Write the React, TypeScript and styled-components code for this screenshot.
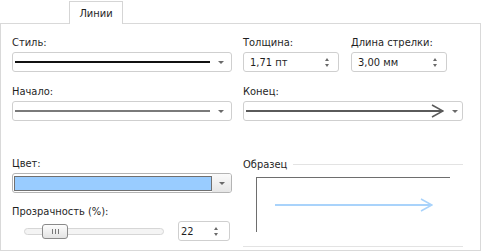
import styled, { createGlobalStyle } from "styled-components";

const Global = createGlobalStyle`
  body {
    margin: 0;
    background: #ffffff;
    font-family: "DejaVu Sans Condensed", "DejaVu Sans", Tahoma, sans-serif;
    font-size: 11px;
    color: #1f1f1f;
  }
`;

const Window = styled.div`
  width: 481px;
  height: 252px;
  display: flex;
  flex-direction: column;
`;

const TabStrip = styled.div`
  display: flex;
  height: 23px;
  padding: 1px 0 0 69px;
  box-sizing: border-box;
`;

const Tab = styled.div`
  width: 54px;
  height: 23px;
  border: 1px solid #d5d5d5;
  border-bottom: none;
  background: #fff;
  box-sizing: border-box;
  display: flex;
  align-items: center;
  justify-content: center;
  position: relative;
  z-index: 1;
  margin-bottom: -1px;
`;

const Panel = styled.div`
  width: 481px;
  height: 228px;
  border: 1px solid #d9d9d9;
  box-sizing: border-box;
  padding: 12px 16px 0 11px;
  display: grid;
  grid-template-columns: 220px 220px;
  column-gap: 11px;
  align-content: start;
`;

const Field = styled.div<{ $top?: number }>`
  display: flex;
  flex-direction: column;
  margin-top: ${(p) => p.$top ?? 0}px;
`;

const Label = styled.div`
  height: 14px;
  line-height: 14px;
  margin-bottom: 2px;
  white-space: nowrap;
`;

const Pair = styled.div`
  display: grid;
  grid-template-columns: 96px 96px;
  column-gap: 12px;
`;

const Select = styled.div`
  height: 20px;
  border: 1px solid #cfcfcf;
  border-radius: 3px;
  box-sizing: border-box;
  display: flex;
  align-items: center;
  padding: 0 7px 0 2px;
  background: #fff;
`;

const LineSample = styled.div<{ $color: string; $w: number }>`
  flex: 1;
  height: ${(p) => p.$w}px;
  background: ${(p) => p.$color};
  margin-right: 8px;
`;

const Caret = styled.span`
  width: 0;
  height: 0;
  border-left: 3px solid transparent;
  border-right: 3px solid transparent;
  border-top: 3px solid #6a6a6a;
`;

const Spin = styled.div`
  height: 20px;
  border: 1px solid #cfcfcf;
  border-radius: 3px;
  box-sizing: border-box;
  display: flex;
  align-items: center;
  justify-content: space-between;
  padding: 0 9px 0 6px;
`;

const SpinArrows = styled.span`
  display: flex;
  flex-direction: column;
  gap: 3px;
  align-items: center;
`;

const Tri = styled.span<{ $up?: boolean }>`
  width: 0;
  height: 0;
  border-left: 2.5px solid transparent;
  border-right: 2.5px solid transparent;
  ${(p) =>
    p.$up ? "border-bottom: 3px solid #6a6a6a;" : "border-top: 3px solid #6a6a6a;"}
`;

const ColorSelect = styled.div`
  height: 20px;
  border: 1px solid #b4b4b4;
  border-radius: 3px;
  box-sizing: border-box;
  display: flex;
  align-items: stretch;
  overflow: hidden;
`;

const Swatch = styled.div<{ $color: string }>`
  flex: 1;
  margin: 2px 0 1px 1px;
  background: ${(p) => p.$color};
  border: 1px solid #707070;
`;

const DropButton = styled.div`
  width: 19px;
  display: flex;
  align-items: center;
  justify-content: center;
  background: linear-gradient(#fafafa, #e6e6e6);
`;

const SliderRow = styled.div`
  display: flex;
  align-items: center;
  height: 20px;
`;

const Track = styled.div`
  position: relative;
  width: 140px;
  height: 7px;
  margin-left: 12px;
  border: 1px solid #d6d6d6;
  border-radius: 4px;
  box-sizing: border-box;
  background: #f4f4f4;
`;

const Thumb = styled.div`
  position: absolute;
  left: 17px;
  top: -5px;
  width: 26px;
  height: 15px;
  border: 1px solid #8a8a8a;
  border-radius: 3px;
  box-sizing: border-box;
  background: linear-gradient(#fdfdfd, #e3e3e3);
  display: flex;
  align-items: center;
  justify-content: center;
  gap: 2px;
`;

const Grip = styled.span`
  width: 1px;
  height: 5px;
  background: #777;
`;

const SmallSpin = styled(Spin)`
  width: 52px;
  margin-left: 14px;
  padding: 0 11px 0 2px;
`;

const Sample = styled.div`
  display: flex;
  flex-direction: column;
  margin-top: 36px;
`;

const LegendRow = styled.div`
  display: flex;
  align-items: center;
  height: 14px;
  gap: 6px;
`;

const Rule = styled.div`
  flex: 1;
  height: 1px;
  background: #e3e3e3;
`;

const Preview = styled.div`
  margin: 6px 0 0 13px;
  width: 194px;
  height: 55px;
  border-top: 1px solid #6e6e6e;
  border-left: 1px solid #6e6e6e;
  box-sizing: border-box;
  display: flex;
  align-items: center;
  padding-left: 18px;
`;

const BottomRule = styled(Rule)`
  flex: none;
  margin-top: 14px;
`;

const Arrow = ({ w, color, open }: { w: number; color: string; open?: boolean }) => (
  <svg width={w} height="14" viewBox={`0 0 ${w} 14`} style={{ flex: "none" }}>
    <line x1="0" y1="7" x2={w - 1} y2="7" stroke={color} strokeWidth="2" />
    {open && (
      <polyline
        points={`${w - 12},1 ${w - 1},7 ${w - 12},13`}
        fill="none"
        stroke={color}
        strokeWidth="1.5"
      />
    )}
  </svg>
);

export default function App() {
  return (
    <Window>
      <Global />
      <TabStrip>
        <Tab>Линии</Tab>
      </TabStrip>
      <Panel>
        <Field>
          <Label>Стиль:</Label>
          <Select>
            <LineSample $color="#111" $w={2} />
            <Caret />
          </Select>
        </Field>
        <Pair>
          <Field>
            <Label>Толщина:</Label>
            <Spin>
              1,71 пт
              <SpinArrows>
                <Tri $up />
                <Tri />
              </SpinArrows>
            </Spin>
          </Field>
          <Field>
            <Label>Длина стрелки:</Label>
            <Spin>
              3,00 мм
              <SpinArrows>
                <Tri $up />
                <Tri />
              </SpinArrows>
            </Spin>
          </Field>
        </Pair>

        <Field $top={13}>
          <Label>Начало:</Label>
          <Select>
            <LineSample $color="#7a7a7a" $w={2} />
            <Caret />
          </Select>
        </Field>
        <Field $top={13}>
          <Label>Конец:</Label>
          <Select>
            <span style={{ flex: 1, display: "flex", marginRight: 8 }}>
              <Arrow w={198} color="#5a5a5a" open />
            </span>
            <Caret />
          </Select>
        </Field>

        <Field $top={36}>
          <Label>Цвет:</Label>
          <ColorSelect>
            <Swatch $color="#99ccff" />
            <DropButton>
              <Caret />
            </DropButton>
          </ColorSelect>
          <Label style={{ marginTop: 12 }}>Прозрачность (%):</Label>
          <SliderRow>
            <Track>
              <Thumb>
                <Grip />
                <Grip />
                <Grip />
              </Thumb>
            </Track>
            <SmallSpin>
              22
              <SpinArrows>
                <Tri $up />
                <Tri />
              </SpinArrows>
            </SmallSpin>
          </SliderRow>
        </Field>
        <Sample>
          <LegendRow>
            Образец
            <Rule />
          </LegendRow>
          <Preview>
            <Arrow w={158} color="#a9d3fb" open />
          </Preview>
          <BottomRule />
        </Sample>
      </Panel>
    </Window>
  );
}
